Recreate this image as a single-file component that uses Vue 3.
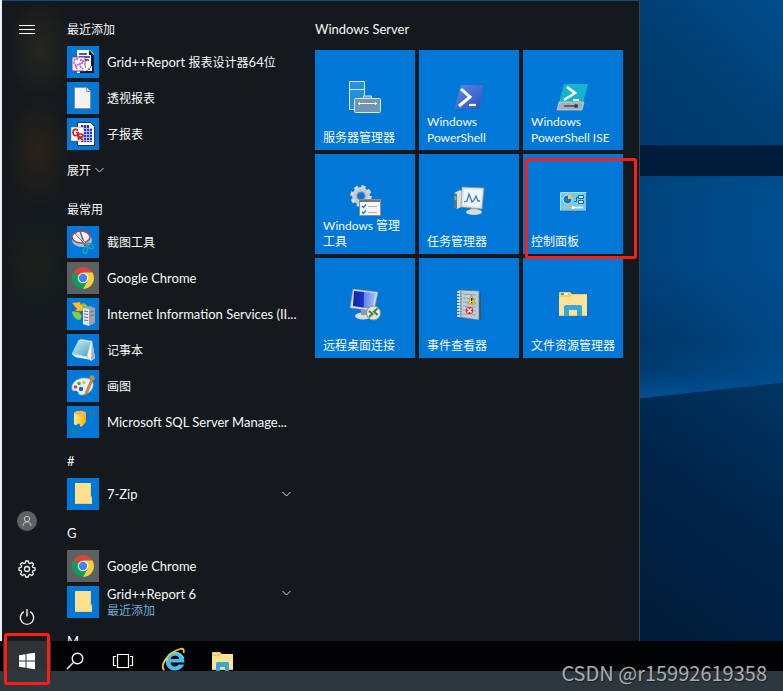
<script setup>
const groups = [
  {
    title: '最近添加',
    expand: true,
    apps: [
      { name: 'Grid++Report 报表设计器64位', icon: 'designer' },
      { name: '透视报表', icon: 'document' },
      { name: '子报表', icon: 'subreport' }
    ]
  },
  {
    title: '最常用',
    apps: [
      { name: '截图工具', icon: 'snip' },
      { name: 'Google Chrome', icon: 'chrome', grey: true },
      { name: 'Internet Information Services (II...', icon: 'iis' },
      { name: '记事本', icon: 'notepad' },
      { name: '画图', icon: 'paint' },
      { name: 'Microsoft SQL Server Manage...', icon: 'sql' }
    ]
  },
  { title: '#', apps: [{ name: '7-Zip', icon: 'folder', folder: true }] },
  {
    title: 'G',
    apps: [
      { name: 'Google Chrome', icon: 'chrome', grey: true },
      { name: 'Grid++Report 6', icon: 'folder', folder: true, note: '最近添加' }
    ]
  },
  { title: 'M', apps: [] }
]

const tiles = [
  { name: '服务器管理器', icon: 'server' },
  { name: 'Windows PowerShell', icon: 'powershell' },
  { name: 'Windows PowerShell ISE', icon: 'ise' },
  { name: 'Windows 管理工具', icon: 'admin' },
  { name: '任务管理器', icon: 'taskmgr' },
  { name: '控制面板', icon: 'control', marked: true },
  { name: '远程桌面连接', icon: 'remote' },
  { name: '事件查看器', icon: 'events' },
  { name: '文件资源管理器', icon: 'explorer' }
]

// Chinese runs are set one size smaller than Latin runs.
const runs = (text) =>
  text
    .split(/([\u4e00-\u9fff]+)/)
    .filter(Boolean)
    .map((t) => ({ t, han: /[\u4e00-\u9fff]/.test(t) }))
</script>

<template>
  <div class="screen">
    <svg class="defs" aria-hidden="true">
      <defs>
        <linearGradient id="gScreen" x1="0" y1="0" x2="1" y2="0">
          <stop offset="0" stop-color="#1020b0" />
          <stop offset=".45" stop-color="#1a35c8" />
          <stop offset=".5" stop-color="#5f86e8" />
          <stop offset="1" stop-color="#a9c6f5" />
        </linearGradient>
        <linearGradient id="gPad" x1="0" y1="0" x2="1" y2="1">
          <stop offset="0" stop-color="#d4f0f6" />
          <stop offset="1" stop-color="#4aa3bd" />
        </linearGradient>
        <linearGradient id="gPs" x1="0" y1="0" x2="1" y2="1">
          <stop offset="0" stop-color="#5b8be6" />
          <stop offset="1" stop-color="#2f50b8" />
        </linearGradient>
        <linearGradient id="gCyl" x1="0" y1="0" x2="1" y2="0">
          <stop offset="0" stop-color="#ffe98a" />
          <stop offset="1" stop-color="#f5b400" />
        </linearGradient>
      </defs>

      <symbol id="designer" viewBox="0 0 32 32">
        <path d="M10 4h13l4 4v19H10z" fill="#fff" />
        <path d="M22 4l5 5h-5z" fill="#111" />
        <path d="M24 9h3v18H13v-2h11z" fill="#15152a" />
        <path d="M12 8h8M12 11h11M18 14h6" stroke="#23237e" stroke-width="1.3" />
        <path d="M23 12v8" stroke="#fff" stroke-width="2" />
        <path d="M5 11h13v14H5z" fill="#fff" stroke="#8a2aa8" />
        <path d="M11 13H8l-1 2v3l1 1h3v-2M13 14h3v3h-3v3M8 21h2v2M13 20l3 3" fill="none" stroke="#c03bd0" stroke-width="1.5" stroke-dasharray="2 1" />
        <path d="M17 20h8v5h-8z" fill="#fff" />
        <path d="M18 21h1M21 23h2M19 25h2M23 21h1" stroke="#111" />
      </symbol>
      <symbol id="document" viewBox="0 0 32 32">
        <path d="M7.500 5.500h12l4 4v17h-16z" fill="#f3f3f3" stroke="#8b8f94" />
        <path d="M19.500 5.500v4h4" fill="#fff" stroke="#8b8f94" />
      </symbol>
      <symbol id="subreport" viewBox="0 0 32 32">
        <path d="M10.500 4.500h13l4 4v19h-17z" fill="#fff" stroke="#28304a" />
        <path d="M14 7h8v3h3v14H14z" fill="#2b35c8" />
        <path d="M16.500 7v17M19.500 7v17M22.500 8v16M13 10.500h12M13 13.500h12M13 16.500h12M13 19.500h12M13 22.500h12" stroke="#cfd4ff" stroke-width=".8" />
        <path d="M4 9h13v14H4z" fill="#fff" stroke="#777" stroke-width=".6" />
        <path d="M11 12.500c-1-2-5-1.500-5 2s3 4 5 2v-2H9M11.500 22v-6h2.500c2.500 0 2.500 3 0 3h-2l4 3" fill="none" stroke="#c81e28" stroke-width="1.700" />
      </symbol>
      <symbol id="snip" viewBox="0 0 32 32">
        <ellipse cx="15" cy="14" rx="10" ry="7" fill="#9cc6e8" />
        <ellipse cx="14" cy="11" rx="9" ry="6" fill="#f4f4f6" stroke="#c8383e" stroke-width="1.500" />
        <path d="M8 7l12 13M13 5l5 15" stroke="#626b76" stroke-width="1.600" />
        <path d="M9 8l9 9" stroke="#dbe2e8" />
        <ellipse cx="23" cy="20" rx="3.500" ry="2" transform="rotate(35 23 20)" fill="none" stroke="#1fa0bd" stroke-width="1.500" />
        <ellipse cx="18.500" cy="24" rx="2" ry="3.500" transform="rotate(12 18 24)" fill="none" stroke="#1fa0bd" stroke-width="1.500" />
      </symbol>
      <symbol id="chrome" viewBox="0 0 32 32">
        <circle cx="16" cy="16" r="11" fill="#0f9d58" />
        <path d="M16 16L6.500 10.500A11 11 0 0 1 25.500 10.500H16z" fill="#db4437" />
        <path d="M16 10.500h9.500A11 11 0 0 1 16 27l4.800-8.200z" fill="#ffcd40" />
        <circle cx="16" cy="16" r="5.300" fill="#f1f1f1" />
        <circle cx="16" cy="16" r="4.200" fill="#4285f4" />
      </symbol>
      <symbol id="iis" viewBox="0 0 32 32">
        <circle cx="13" cy="13" r="8.500" fill="#2463c4" />
        <path d="M5 14c3-2 4 1 7 0l3 4-2 4c-4 0-7-3-8-8zM15 5c4 0 6 3 6 5l-4 3-3-4z" fill="#7bd044" />
        <path d="M5 5l8-1 1 3 2-2v8H8l2-2z" fill="#fbc12e" stroke="#b87a0a" stroke-width=".5" />
        <path d="M16 10l7-2 5 2v15l-6 3-6-2z" fill="#9ca3aa" />
        <path d="M16 10l6 1v17l-6-2z" fill="#e1e4e7" />
        <path d="M17 13l4 .6M17 16l4 .6M17 19l4 .6M17 22l4 .6M23 14l4-1M23 18l4-1" stroke="#70777f" />
      </symbol>
      <symbol id="notepad" viewBox="0 0 32 32">
        <path d="M13 5l12 2 3 17-4 3-5-6z" fill="#eef1f2" />
        <path d="M25 7l3 17-4 2z" fill="#a9b3b8" />
        <path d="M12 6l12 2-4 15L5 20z" fill="url(#gPad)" stroke="#cde9f0" stroke-width=".6" />
        <path d="M5 20l15 3 4 3-16-3z" fill="#f7f7f7" />
        <path d="M13 5l12 2" stroke="#8b989e" stroke-dasharray="1 1" />
      </symbol>
      <symbol id="paint" viewBox="0 0 32 32">
        <path d="M5 19C4 13 10 8 17 8c6 0 10 3 9 8-1 6-7 9-12 9-3 0-2-3-4-4s-4 1-5-2z" fill="#e6f1fa" stroke="#9eb9cf" stroke-width=".6" />
        <circle cx="8.500" cy="17" r="1.800" fill="#e23b3b" />
        <circle cx="12" cy="13.500" r="1.800" fill="#3fb04b" />
        <circle cx="17" cy="12.500" r="1.800" fill="#f2c12d" />
        <circle cx="14" cy="19" r="2.200" fill="#1d66b8" />
        <path d="M17 27l2-6 5-12 2 1-5 12z" fill="#e68b30" stroke="#a95715" stroke-width=".5" />
        <path d="M22 8l2-3 3 1 1 3-3 2z" fill="#c28a56" />
      </symbol>
      <symbol id="sql" viewBox="0 0 32 32">
        <path d="M7 7v11c1 2 3 1 4 0s2 0 2 2 3 0 5-3l1-1V7z" fill="url(#gCyl)" />
        <ellipse cx="13" cy="7" rx="6" ry="2.200" fill="#ffb457" />
        <path d="M22 6h5v4M6 22v4h5" fill="none" stroke="#2d8a68" stroke-width="1.600" />
      </symbol>
      <symbol id="folder" viewBox="0 0 32 32">
        <path d="M8 5h16v13l1 3v5H8z" fill="#ffe08f" />
        <path d="M8 25h17v1H8zM24 5v13l1 1v3l-2-3V5z" fill="#f0cd73" />
      </symbol>

      <symbol id="server" viewBox="0 0 34 34">
        <path d="M1.500 1.500h15v28h-15z" fill="#2591db" stroke="#d5ebfa" />
        <path d="M1 9.500h16" stroke="#d5ebfa" />
        <path d="M15.500 18v-2h8v2" fill="#6b96b8" stroke="#d5ebfa" />
        <rect x="6.500" y="18.500" width="26" height="14" rx="1" fill="#7295b0" stroke="#d5ebfa" />
        <path d="M10 23.500h19" stroke="#fff" />
        <path d="M12 22.300l-1.600 1.200 1.600 1.200M27 22.300l1.600 1.200-1.600 1.200" fill="none" stroke="#fff" />
      </symbol>
      <symbol id="powershell" viewBox="0 0 34 34">
        <path d="M9 5h23l-5 24H2z" fill="url(#gPs)" />
        <path d="M9 9l9 8-11 9" fill="none" stroke="#fff" stroke-width="3" />
        <path d="M17 25h7" stroke="#fff" stroke-width="2.200" />
      </symbol>
      <symbol id="ise" viewBox="0 0 34 34">
        <path d="M8 4h24l-5 19H3z" fill="#17b4ca" />
        <path d="M11 7l8 6-11 7" fill="none" stroke="#fff" stroke-width="2.600" />
        <path d="M17 20h6" stroke="#fff" stroke-width="2" />
        <path d="M3 22h25l-2 8H1z" fill="#a4b0b7" stroke="#e1e6e8" stroke-width=".6" />
        <path d="M8 26h13" stroke="#48525a" stroke-width="1.600" />
        <circle cx="20" cy="26" r="2" fill="#34414a" />
      </symbol>
      <symbol id="admin" viewBox="0 0 34 34">
        <circle cx="13" cy="12" r="6.500" fill="none" stroke="#c4cbd1" stroke-width="5" />
        <circle cx="13" cy="12" r="9" fill="none" stroke="#d4dade" stroke-width="3.600" stroke-dasharray="4 3.070" />
        <circle cx="13" cy="12" r="4.200" fill="none" stroke="#8f9aa3" />
        <path d="M11.500 15.500h21v16h-21z" fill="#f6f6f6" stroke="#8e8e8e" />
        <path d="M12 16h20v2H12z" fill="#70767c" />
        <path d="M14 22l1.500 1.500L18 20.500M14 28l1.500 1.500 2.500-3" fill="none" stroke="#287fcb" stroke-width="1.500" />
        <path d="M20 22.500h9M20 28.500h9" stroke="#b3b3b3" />
      </symbol>
      <symbol id="taskmgr" viewBox="0 0 34 34">
        <path d="M2 9l6-3 3 2v14l-6 3-3-2z" fill="#d9dce0" />
        <path d="M2 9l3 1v15l-3-2z" fill="#667078" />
        <path d="M3.500 12v4" stroke="#5be04d" stroke-width="1.500" />
        <path d="M19 23h6l1 4h-8z" fill="#9aa4ad" />
        <ellipse cx="22" cy="28" rx="8" ry="3" fill="#d5dade" />
        <path d="M10 3l22 1-2 21-21-2z" fill="#e5e2da" stroke="#8e9397" stroke-width=".7" />
        <path d="M12 5l18 1-2 17-17-2z" fill="#edf7ff" />
        <path d="M12 18l3-1 2-7 3 8 2-2 2-4 2 5h2" fill="none" stroke="#3f78c3" stroke-width="1.300" />
      </symbol>
      <symbol id="control" viewBox="0 0 34 34">
        <path d="M4.500 8.500h26v18h-26z" fill="#71caf2" stroke="#a1e0fa" />
        <path d="M30.500 8.500v18.500h-26" fill="none" stroke="#1e6ca8" />
        <circle cx="11.500" cy="15.500" r="4.500" fill="#1677bd" stroke="#fff" stroke-width=".8" />
        <path d="M12 15v-4.500a5 5 0 0 1 4.500 4.500z" fill="#ffc65a" />
        <path d="M18 17.500h2.500v-4H22" fill="none" stroke="#1269a5" />
        <path d="M22.500 11.500h5v3h-5zM22.500 16.500h5v3h-5z" fill="#d3f0fc" stroke="#1269a5" />
        <path d="M8 23.500h8" stroke="#ffba49" stroke-width="1.500" />
        <path d="M18 23.500h9" stroke="#fff" stroke-width="1.500" />
        <path d="M17 22v3" stroke="#fff" stroke-width="2" />
      </symbol>
      <symbol id="remote" viewBox="0 0 34 34">
        <ellipse cx="15" cy="28" rx="8" ry="3.500" fill="#d5dbe2" />
        <path d="M13 22h7l1 5h-8z" fill="#8d99a6" />
        <path d="M5 1l25 3-4 19L2 20z" fill="#d5d9df" stroke="#7d8896" stroke-width=".5" />
        <path d="M6 3l22 2-4 16-19-3z" fill="url(#gScreen)" />
        <circle cx="25.500" cy="25" r="7" fill="#e3e7e2" stroke="#8a9189" />
        <path d="M21 23l3.500 3-3.500 3M29.500 20.500L26 23.500l3.500 3.500" fill="none" stroke="#408337" stroke-width="2" />
      </symbol>
      <symbol id="events" viewBox="0 0 34 34">
        <path d="M26 4l3 2v25l-3 1z" fill="#35556c" />
        <path d="M7 2l20 1v29L7 29z" fill="#bdcdd9" stroke="#6b7a87" stroke-width=".7" />
        <path d="M11 6l13 1M11 10l13 1M11 14l13 1M11 18l13 1M11 22l13 1M11 26l13 1" stroke="#8ba3b4" />
        <path d="M5 4h5M5 7h5M5 10h5M5 13h5M5 16h5M5 19h5M5 22h5M5 25h5M5 28h5" stroke="#eee" stroke-width="1.400" />
        <path d="M9 3v26" stroke="#58636c" />
        <path d="M19.500 7.500l4 8.500h-7.500z" fill="#ffdd27" stroke="#9a7b08" stroke-width=".6" />
        <path d="M19.700 10v3M19.700 14v1.200" stroke="#111" stroke-width="1.300" />
        <circle cx="17.500" cy="22.500" r="4.300" fill="#d23232" stroke="#eee" stroke-width=".6" />
        <path d="M15.500 20.500l4 4M19.500 20.500l-4 4" stroke="#fff" stroke-width="1.500" />
      </symbol>
      <symbol id="explorer" viewBox="0 0 34 34">
        <path d="M3 5q0-1 1-1h10l2 2h15v22H3z" fill="#f4cc6a" />
        <path d="M5 5h7v2H5z" fill="#fff" />
        <path d="M5 5h3v2H5z" fill="#2aa0e0" />
        <path d="M3 9h11l2-2h15v20H3z" fill="#ffe394" />
        <path d="M8 28V18l2-1h14l2 1v10h-5v-6h-8v6z" fill="#34a8dc" />
      </symbol>
    </svg>

    <div class="top">
      <main class="menu">
        <nav class="rail">
          <button class="rail-btn" aria-label="菜单">
            <svg width="16" height="16" viewBox="0 0 16 16"><path d="M0 4.500h16M0 8.500h16M0 12.500h16" stroke="#fff" /></svg>
          </button>
          <span class="spacer"></span>
          <button class="rail-btn" aria-label="用户">
            <svg width="20" height="20" viewBox="0 0 20 20">
              <circle cx="10" cy="10" r="10" fill="#5f6263" />
              <circle cx="10" cy="8" r="2.700" fill="none" stroke="#c8c8c8" />
              <path d="M6 15c0-5.500 8-5.500 8 0" fill="none" stroke="#c8c8c8" />
            </svg>
          </button>
          <button class="rail-btn" aria-label="设置">
            <svg width="18" height="18" viewBox="0 0 18 18" fill="none" stroke="#f2f2f2" stroke-width="1.300" stroke-linejoin="round">
              <path d="M7.700 1h2.600l.4 2 1.400.6L13.800 2.500l1.800 1.800-1.200 1.700.6 1.400 2 .4v2.500l-2 .4-.6 1.400 1.200 1.700-1.800 1.800-1.700-1.200-1.400.6-.4 2H7.700l-.4-2-1.400-.6-1.700 1.200-1.800-1.800 1.200-1.700-.6-1.400-2-.4V7.800l2-.4L3.600 6 2.400 4.300l1.800-1.800 1.700 1.100L7.300 3z" />
              <circle cx="9" cy="9" r="2.500" />
            </svg>
          </button>
          <button class="rail-btn" aria-label="电源">
            <svg width="16" height="18" viewBox="0 0 16 18" fill="none" stroke="#f2f2f2" stroke-width="1.400">
              <path d="M5 3.700a6.700 6.700 0 1 0 6 0M8 1v7.500" />
            </svg>
          </button>
        </nav>

        <div class="apps">
          <section v-for="group in groups" :key="group.title">
            <h2 class="heading" :class="{ han: group.title.length > 1 }">{{ group.title }}</h2>
            <ul class="list">
              <li v-for="app in group.apps" :key="app.name">
                <button class="app">
                  <span class="plate" :class="{ grey: app.grey }">
                    <svg width="32" height="32"><use :href="'#' + app.icon" /></svg>
                  </span>
                  <span class="name">
                    <span class="line"><span v-for="r in runs(app.name)" :key="r.t" :class="{ han: r.han }">{{ r.t }}</span></span>
                    <span v-if="app.note" class="note han">{{ app.note }}</span>
                  </span>
                  <svg v-if="app.folder" class="chevron" :class="{ raised: app.note }" width="9" height="6" viewBox="0 0 9 6"><path d="M.5 1l4 4 4-4" fill="none" stroke="#ddd" /></svg>
                </button>
              </li>
            </ul>
            <button v-if="group.expand" class="expand han">
              展开
              <svg width="9" height="6" viewBox="0 0 9 6"><path d="M.5 1l4 4 4-4" fill="none" stroke="#ccc" /></svg>
            </button>
          </section>
        </div>

        <section class="pinned">
          <h2 class="heading">Windows Server</h2>
          <div class="tiles">
            <button v-for="tile in tiles" :key="tile.name" class="tile">
              <svg width="34" height="34"><use :href="'#' + tile.icon" /></svg>
              <span class="caption">{{ tile.name }}</span>
              <span v-if="tile.marked" class="mark mark-tile"></span>
            </button>
          </div>
        </section>
      </main>

      <svg class="wallpaper" viewBox="0 0 143 640" preserveAspectRatio="none" aria-hidden="true">
        <defs>
          <linearGradient id="wTop" gradientUnits="userSpaceOnUse" x1="0" y1="145" x2="143" y2="0">
            <stop offset="0" stop-color="#00386a" /><stop offset=".5" stop-color="#003f74" /><stop offset="1" stop-color="#004e8c" />
          </linearGradient>
          <linearGradient id="wMid" x1="0" y1="0" x2="0" y2="1">
            <stop offset="0" stop-color="#00437b" /><stop offset=".4" stop-color="#00427c" />
            <stop offset=".75" stop-color="#003768" /><stop offset=".88" stop-color="#003c72" /><stop offset="1" stop-color="#005092" />
          </linearGradient>
          <linearGradient id="wSide" x1="0" y1="0" x2="1" y2="0">
            <stop offset="0" stop-color="#005ba5" stop-opacity="0" /><stop offset="1" stop-color="#005ba5" stop-opacity=".45" />
          </linearGradient>
          <linearGradient id="wLow" x1=".7" y1="0" x2=".3" y2="1">
            <stop offset="0" stop-color="#003260" /><stop offset=".5" stop-color="#002347" /><stop offset="1" stop-color="#001c3a" />
          </linearGradient>
        </defs>
        <path d="M0 0h143v640H0z" fill="url(#wTop)" />
        <path d="M0 145h143v31H0z" fill="#001c3a" />
        <path d="M0 176h143v206L0 398z" fill="url(#wMid)" />
        <path d="M0 176h143v206L0 398z" fill="url(#wSide)" />
        <path d="M0 398l143-16v258H0z" fill="url(#wLow)" />
      </svg>
    </div>

    <footer class="taskbar">
      <button class="task start" aria-label="开始">
        <svg width="30" height="30" viewBox="0 0 30 30">
          <path d="M7 14.200l6.500-1v6.300H7zM14.500 13l8.500-1.200v7.700h-8.500zM7 20.500h6.500v6.300l-6.500-1zM14.500 20.500H23v7.700L14.500 27z" fill="#fff" />
        </svg>
        <span class="mark mark-start"></span>
      </button>
      <button class="task" aria-label="搜索">
        <svg width="30" height="30" viewBox="0 0 30 30" fill="none" stroke="#fff" stroke-width="1.400">
          <circle cx="17.500" cy="17.500" r="5.300" /><path d="M13.700 21.300L7 28" />
        </svg>
      </button>
      <button class="task" aria-label="任务视图">
        <svg width="30" height="30" viewBox="0 0 30 30" fill="none" stroke="#fff" stroke-width="1.200">
          <path d="M9.500 13.500h11v13h-11zM8 15.500H5.500v9H8M22 15.500h2.500v9H22" />
        </svg>
      </button>
      <button class="task first-app" aria-label="Internet Explorer">
        <svg width="30" height="30" viewBox="0 0 30 30">
          <path d="M25.500 21.500H11.500c.3 4.500 6.500 5 8 2h5.600c-3 8.500-18.300 8.500-18.300-3.300 0-12.700 18.900-12.700 18.700 1.300zM11.600 18h8.600c-.4-4.200-7.800-4.200-8.600 0z" fill="#48bbef" fill-rule="evenodd" />
          <path d="M8 20c0-10 14-11 16.500-3" fill="none" stroke="#a8e4fb" stroke-width="1" />
          <path d="M5.500 29C0 26 8 12 21 8c3.500-1 4.500 1 3.500 4" fill="none" stroke="#f6c627" stroke-width="1.800" />
        </svg>
      </button>
      <button class="task" aria-label="文件资源管理器">
        <svg width="30" height="30" viewBox="0 0 30 30">
          <path d="M5 12q0-1 1-1h7l2 2h11v16H5z" fill="#f1c967" />
          <path d="M6 12h5v1H6z" fill="#fff" />
          <path d="M5 15h8l2-2h11v15H5z" fill="#ffe394" />
          <path d="M9 30v-8l1-1h11l1 1v8h-4v-4h-5v4z" fill="#34a8dc" />
        </svg>
      </button>
    </footer>
    <div class="strip"><span class="watermark">CSDN @r15992619358</span></div>
  </div>
</template>

<style>
body {
  margin: 0;
}
</style>

<style scoped>
* {
  box-sizing: border-box;
}
.screen {
  display: flex;
  flex-direction: column;
  height: 100vh;
  overflow: hidden;
  font: 13px/16px Lato, "Noto Sans CJK SC", sans-serif;
  color: #f8f8f8;
  background: #2d373e;
}
.defs {
  position: absolute;
  width: 0;
  height: 0;
}
button {
  margin: 0;
  padding: 0;
  border: 0;
  background: none;
  font: inherit;
  color: inherit;
  text-align: left;
}
.han {
  font-family: "Noto Sans CJK SC", sans-serif;
  font-size: 12px;
}
.top {
  display: flex;
  flex: 1;
  min-height: 0;
  border-left: 2px solid #eceef0;
}
.menu {
  display: flex;
  flex: none;
  overflow: hidden;
  border-top: 1px solid #174a78;
  border-right: 1px solid #35434f;
  padding-right: 16px;
  background:
    radial-gradient(ellipse 34px 52px at 38px 48px, #262620, transparent),
    radial-gradient(ellipse 34px 58px at 36px 150px, #2a221b, transparent),
    radial-gradient(ellipse 40px 56px at 34px 262px, #1a211c, transparent),
    #13191c;
}
.rail {
  display: flex;
  flex-direction: column;
  width: 50px;
  padding-top: 4px;
}
.spacer {
  flex: 1;
}
.rail-btn {
  display: grid;
  place-items: center;
  width: 50px;
  height: 48px;
}
.apps {
  width: 248px;
  padding: 7px 0 0 15px;
}
.heading {
  margin: 0;
  padding-top: 6px;
  height: 36px;
  font-weight: 400;
  line-height: 30px;
}
.heading:not(.han) {
  font-size: 13px;
}
.list {
  margin: 0;
  padding: 0;
  list-style: none;
}
.app {
  display: flex;
  align-items: center;
  gap: 8px;
  width: 100%;
  height: 36px;
}
.plate {
  flex: none;
  width: 32px;
  height: 32px;
  background: #0078d7;
}
.plate svg,
.task svg {
  display: block;
}
.grey {
  background: #5d6063;
}
.name {
  flex: 1;
  white-space: nowrap;
}
.line,
.note {
  display: block;
}
.line span {
  white-space: pre;
}
.note {
  color: #72a9d6;
}
.chevron {
  margin-right: 9px;
}
.raised {
  align-self: flex-start;
  margin-top: 6px;
}
.expand {
  display: flex;
  align-items: center;
  gap: 4px;
  height: 36px;
}
.pinned {
  padding: 7px 0 0 15px;
}
.tiles {
  display: grid;
  grid-template-columns: repeat(3, 100px);
  grid-auto-rows: 100px;
  gap: 4px;
  margin-top: 6px;
}
.tile {
  position: relative;
  display: flex;
  flex-direction: column;
  justify-content: space-between;
  align-items: center;
  padding: 30px 8px 4px;
  background: #0078d7;
  font-size: 12px;
}
.tile svg {
  flex: none;
}
.caption {
  width: 100%;
}
.mark {
  position: absolute;
  z-index: 1;
  border: 3px solid #fb1e16;
  border-radius: 3px;
}
.mark-tile {
  inset: 4px -14px -5px 2px;
}
.mark-start {
  inset: -8px 1px -14px;
}
.wallpaper {
  flex: 1;
  min-width: 0;
  height: 100%;
}
.taskbar {
  display: flex;
  flex: none;
  height: 30px;
  padding-left: 3px;
  background: #010305;
}
.task {
  position: relative;
  display: flex;
  justify-content: center;
  width: 48px;
}
.start {
  background: #303334;
}
.first-app {
  margin-left: 3px;
}
.strip {
  display: flex;
  flex: none;
  justify-content: flex-end;
  align-items: center;
  height: 20px;
  padding-right: 16px;
  background: #2d373e;
}
.watermark {
  margin-bottom: 16px;
  z-index: 1;
  font: 20px/24px "Noto Sans CJK SC", sans-serif;
  color: #a9adb0;
  text-shadow: 1px 1px 1px #1a1d20;
}
</style>
